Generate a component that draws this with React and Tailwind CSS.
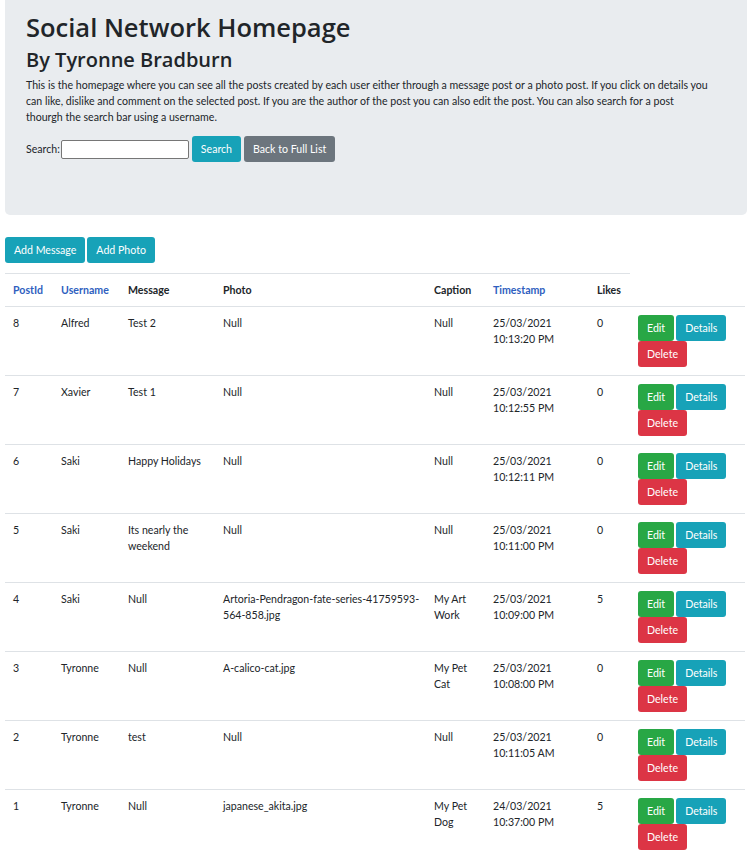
import React from 'react';

const posts = [
  { id: 8, user: 'Alfred', message: 'Test 2', photo: 'Null', caption: 'Null', date: '25/03/2021', time: '10:13:20 PM', likes: 0 },
  { id: 7, user: 'Xavier', message: 'Test 1', photo: 'Null', caption: 'Null', date: '25/03/2021', time: '10:12:55 PM', likes: 0 },
  { id: 6, user: 'Saki', message: 'Happy Holidays', photo: 'Null', caption: 'Null', date: '25/03/2021', time: '10:12:11 PM', likes: 0 },
  { id: 5, user: 'Saki', message: 'Its nearly the weekend', photo: 'Null', caption: 'Null', date: '25/03/2021', time: '10:11:00 PM', likes: 0 },
  { id: 4, user: 'Saki', message: 'Null', photo: ['Artoria-Pendragon-fate-series-41759593-', '564-858.jpg'], caption: 'My Art Work', date: '25/03/2021', time: '10:09:00 PM', likes: 5 },
  { id: 3, user: 'Tyronne', message: 'Null', photo: 'A-calico-cat.jpg', caption: 'My Pet Cat', date: '25/03/2021', time: '10:08:00 PM', likes: 0 },
  { id: 2, user: 'Tyronne', message: 'test', photo: 'Null', caption: 'Null', date: '25/03/2021', time: '10:11:05 AM', likes: 0 },
  { id: 1, user: 'Tyronne', message: 'Null', photo: 'japanese_akita.jpg', caption: 'My Pet Dog', date: '24/03/2021', time: '10:37:00 PM', likes: 5 },
];

const btn = 'inline-block px-[8px] py-[4px] border border-transparent rounded-[3px] text-white leading-[16px] text-[10.6px]';

export default function App() {
  return (
    <div className="px-[5px] text-[#212529] text-[10.6px] leading-[16px] font-['Lato',sans-serif]">
      {/* Jumbotron */}
      <div className="bg-[#e9ecef] rounded-b-[5px] px-[21px] pt-[11px] pb-[53px] mb-[22px]">
        <h1 className="font-['Open_Sans',sans-serif] text-[25.5px] leading-[32px] font-semibold mb-[4px]">Social Network Homepage</h1>
        <h2 className="font-['Open_Sans',sans-serif] text-[20px] leading-[26px] font-semibold mb-[4px]">By Tyronne Bradburn</h2>
        <div className="mb-[11px] whitespace-nowrap">
          <p>This is the homepage where you can see all the posts created by each user either through a message post or a photo post. If you click on details you</p>
          <p>can like, dislike and comment on the selected post. If you are the author of the post you can also edit the post. You can also search for a post</p>
          <p>thourgh the search bar using a username.</p>
        </div>
        <div className="flex items-center">
          <label className="mr-[1px]">Search:</label>
          <input type="text" className="w-[128px] h-[19px] border border-[#767676] rounded-[2px] bg-white" />
          <button className={btn + ' bg-[#17a2b8] ml-[3px]'}>Search</button>
          <button className={btn + ' bg-[#6c757d] ml-[3px]'}>Back to Full List</button>
        </div>
      </div>

      <div className="flex gap-[2px] mb-[10px]">
        <button className={btn + ' bg-[#17a2b8]'}>Add Message</button>
        <button className={btn + ' bg-[#17a2b8]'}>Add Photo</button>
      </div>

      <table className="w-[740px] table-fixed border-collapse">
        <colgroup>
          <col className="w-[48px]" />
          <col className="w-[67px]" />
          <col className="w-[95px]" />
          <col className="w-[211px]" />
          <col className="w-[59px]" />
          <col className="w-[104px]" />
          <col className="w-[41px]" />
          <col className="w-[115px]" />
        </colgroup>
        <thead>
          <tr className="text-left font-bold">
            <th className="p-[8px] border-t border-[#dee2e6] text-[#2f5fc0]">PostId</th>
            <th className="p-[8px] border-t border-[#dee2e6] text-[#2f5fc0]">Username</th>
            <th className="p-[8px] border-t border-[#dee2e6]">Message</th>
            <th className="p-[8px] border-t border-[#dee2e6]">Photo</th>
            <th className="p-[8px] border-t border-[#dee2e6]">Caption</th>
            <th className="p-[8px] border-t border-[#dee2e6] text-[#2f5fc0]">Timestamp</th>
            <th className="p-[8px] border-t border-[#dee2e6]">Likes</th>
            <th></th>
          </tr>
        </thead>
        <tbody>
          {posts.map((p) => (
            <tr key={p.id} className="align-top border-t border-[#dee2e6]">
              <td className="p-[8px]">{p.id}</td>
              <td className="p-[8px]">{p.user}</td>
              <td className="p-[8px]">{p.message}</td>
              <td className="p-[8px]">
                {Array.isArray(p.photo) ? p.photo.map((l) => <div key={l} className="whitespace-nowrap">{l}</div>) : p.photo}
              </td>
              <td className="p-[8px]">{p.caption}</td>
              <td className="p-[8px]">
                <div>{p.date}</div>
                <div>{p.time}</div>
              </td>
              <td className="p-[8px]">{p.likes}</td>
              <td className="p-[8px]">
                <div className="flex flex-wrap gap-x-[2px]">
                  <button className={btn + ' bg-[#28a745]'}>Edit</button>
                  <button className={btn + ' bg-[#17a2b8]'}>Details</button>
                  <button className={btn + ' bg-[#dc3545]'}>Delete</button>
                </div>
              </td>
            </tr>
          ))}
        </tbody>
      </table>
    </div>
  );
}
